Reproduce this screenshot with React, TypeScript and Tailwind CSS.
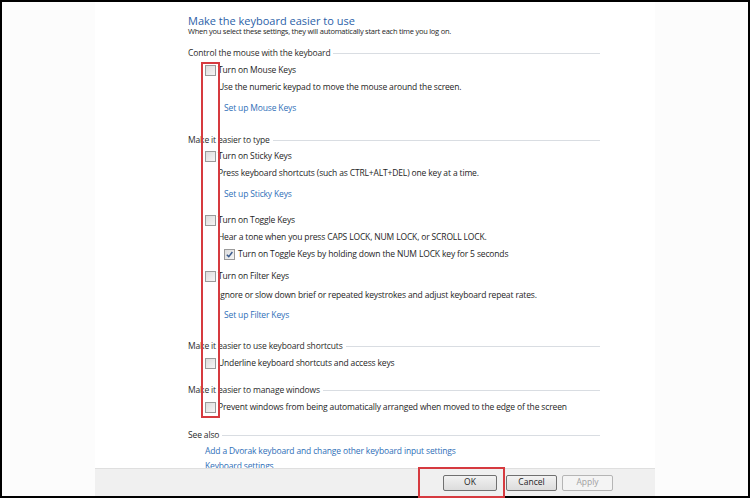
import React from 'react';

const font = { fontFamily: '"Open Sans", "Noto Sans", Arial, sans-serif' };

function Checkbox({ checked = false }: { checked?: boolean }) {
  return (
    <span className="relative flex h-[11px] w-[11px] shrink-0 items-center justify-center border border-[#9a9a9a] bg-gradient-to-br from-[#dcdcdc] to-[#f6f6f6]">
      {checked && (
        <svg viewBox="0 0 10 10" className="h-[9px] w-[9px]">
          <path d="M2 5.2 L4.2 7.5 L8.2 2.2" fill="none" stroke="#3a5a8c" strokeWidth={1.6} />
        </svg>
      )}
    </span>
  );
}

function Header({ text, className }: { text: string; className: string }) {
  return (
    <div className={`flex h-[14px] items-center text-[8.5px] tracking-[-0.15px] text-[#2b2b2b] ${className}`}>
      <span className="whitespace-nowrap">{text}</span>
      <span className="ml-[3px] h-px flex-1 bg-[#d9dde2]" />
    </div>
  );
}

function Check({ text, className, checked }: { text: string; className: string; checked?: boolean }) {
  return (
    <div className={`flex h-[14px] items-center pl-[17px] text-[8.5px] tracking-[-0.15px] text-[#1e1e1e] ${className}`}>
      <Checkbox checked={checked} />
      <span className="ml-[2px] whitespace-nowrap">{text}</span>
    </div>
  );
}

function Desc({ text, className }: { text: string; className: string }) {
  return (
    <div className={`flex h-[14px] items-center pl-[30px] text-[8.5px] tracking-[-0.15px] text-[#1e1e1e] ${className}`}>
      <span className="whitespace-nowrap">{text}</span>
    </div>
  );
}

function Link({ text, className }: { text: string; className: string }) {
  return (
    <div className={`flex h-[14px] items-center text-[8.5px] tracking-[-0.15px] text-[#2f6fb8] ${className}`}>
      <span className="whitespace-nowrap">{text}</span>
    </div>
  );
}

export default function App() {
  return (
    <div className="relative h-[500px] w-[750px] overflow-hidden bg-white" style={font}>
      <div className="flex h-[498px] w-[750px] border-2 border-black">
        <div className="w-[93px] shrink-0 bg-[#fcfcfc]" />
        <div className="flex w-[560px] shrink-0 flex-col bg-white">
          <div className="flex-1 overflow-hidden pl-[93px] pr-[55px] pt-[11px]">
            <div className="flex h-[14px] items-center text-[11px] leading-none text-[#2c5fa8]">
              Make the keyboard easier to use
            </div>
            <div className="flex h-[10px] items-center text-[7.5px] leading-none tracking-[-0.25px] text-[#1e1e1e]">
              When you select these settings, they will automatically start each time you log on.
            </div>

            <Header text="Control the mouse with the keyboard" className="mt-[9px]" />
            <Check text="Turn on Mouse Keys" className="mt-[3px]" />
            <Desc text="Use the numeric keypad to move the mouse around the screen." className="mt-[3px]" />
            <Link text="Set up Mouse Keys" className="mt-[7px] pl-[36px]" />

            <Header text="Make it easier to type" className="mt-[18px]" />
            <Check text="Turn on Sticky Keys" className="mt-[2px]" />
            <Desc text="Press keyboard shortcuts (such as CTRL+ALT+DEL) one key at a time." className="mt-[3px]" />
            <Link text="Set up Sticky Keys" className="mt-[7px] pl-[36px]" />

            <Check text="Turn on Toggle Keys" className="mt-[12px]" />
            <Desc text="Hear a tone when you press CAPS LOCK, NUM LOCK, or SCROLL LOCK." className="mt-[3px]" />
            <div className="mt-[3px] flex h-[14px] items-center pl-[36px] text-[8.5px] tracking-[-0.15px] text-[#1e1e1e]">
              <Checkbox checked />
              <span className="ml-[3px] whitespace-nowrap">
                Turn on Toggle Keys by holding down the NUM LOCK key for 5 seconds
              </span>
            </div>
            <Check text="Turn on Filter Keys" className="mt-[8px]" />
            <Desc
              text="Ignore or slow down brief or repeated keystrokes and adjust keyboard repeat rates."
              className="mt-[5px]"
            />
            <Link text="Set up Filter Keys" className="mt-[6px] pl-[36px]" />

            <Header text="Make it easier to use keyboard shortcuts" className="mt-[17px]" />
            <Check text="Underline keyboard shortcuts and access keys" className="mt-[3px]" />

            <Header text="Make it easier to manage windows" className="mt-[13px]" />
            <Check
              text="Prevent windows from being automatically arranged when moved to the edge of the screen"
              className="mt-[3px]"
            />

            <Header text="See also" className="mt-[14px]" />
            <Link text="Add a Dvorak keyboard and change other keyboard input settings" className="mt-[2px] pl-[17px]" />
            <Link text="Keyboard settings" className="mt-px pl-[17px]" />
          </div>

          <div className="flex h-[28px] shrink-0 items-center justify-end border-t border-[#dfdfdf] bg-[#f0f0f0] pr-[42px]">
            <button className="h-[16px] w-[54px] rounded-[2px] border border-[#707070] bg-gradient-to-b from-[#f2f2f2] to-[#dcdcdc] text-[8.5px] text-[#1e1e1e]">
              OK
            </button>
            <button className="ml-[9px] h-[16px] w-[51px] rounded-[2px] border border-[#707070] bg-gradient-to-b from-[#f2f2f2] to-[#dcdcdc] text-[8.5px] text-[#1e1e1e]">
              Cancel
            </button>
            <button className="ml-[5px] h-[16px] w-[51px] rounded-[2px] border border-[#b5b5b5] bg-[#f4f4f4] text-[8.5px] text-[#a0a0a0]">
              Apply
            </button>
          </div>
        </div>
        <div className="flex-1 bg-[#fcfcfc]" />
      </div>

      {/* annotation boxes */}
      <div className="absolute left-[201px] top-[62px] h-[356px] w-[19px] border-2 border-[#d63a3f]" />
      <div className="absolute left-[418px] top-[467px] h-[31px] w-[87px] border-2 border-[#d63a3f]" />
    </div>
  );
}
